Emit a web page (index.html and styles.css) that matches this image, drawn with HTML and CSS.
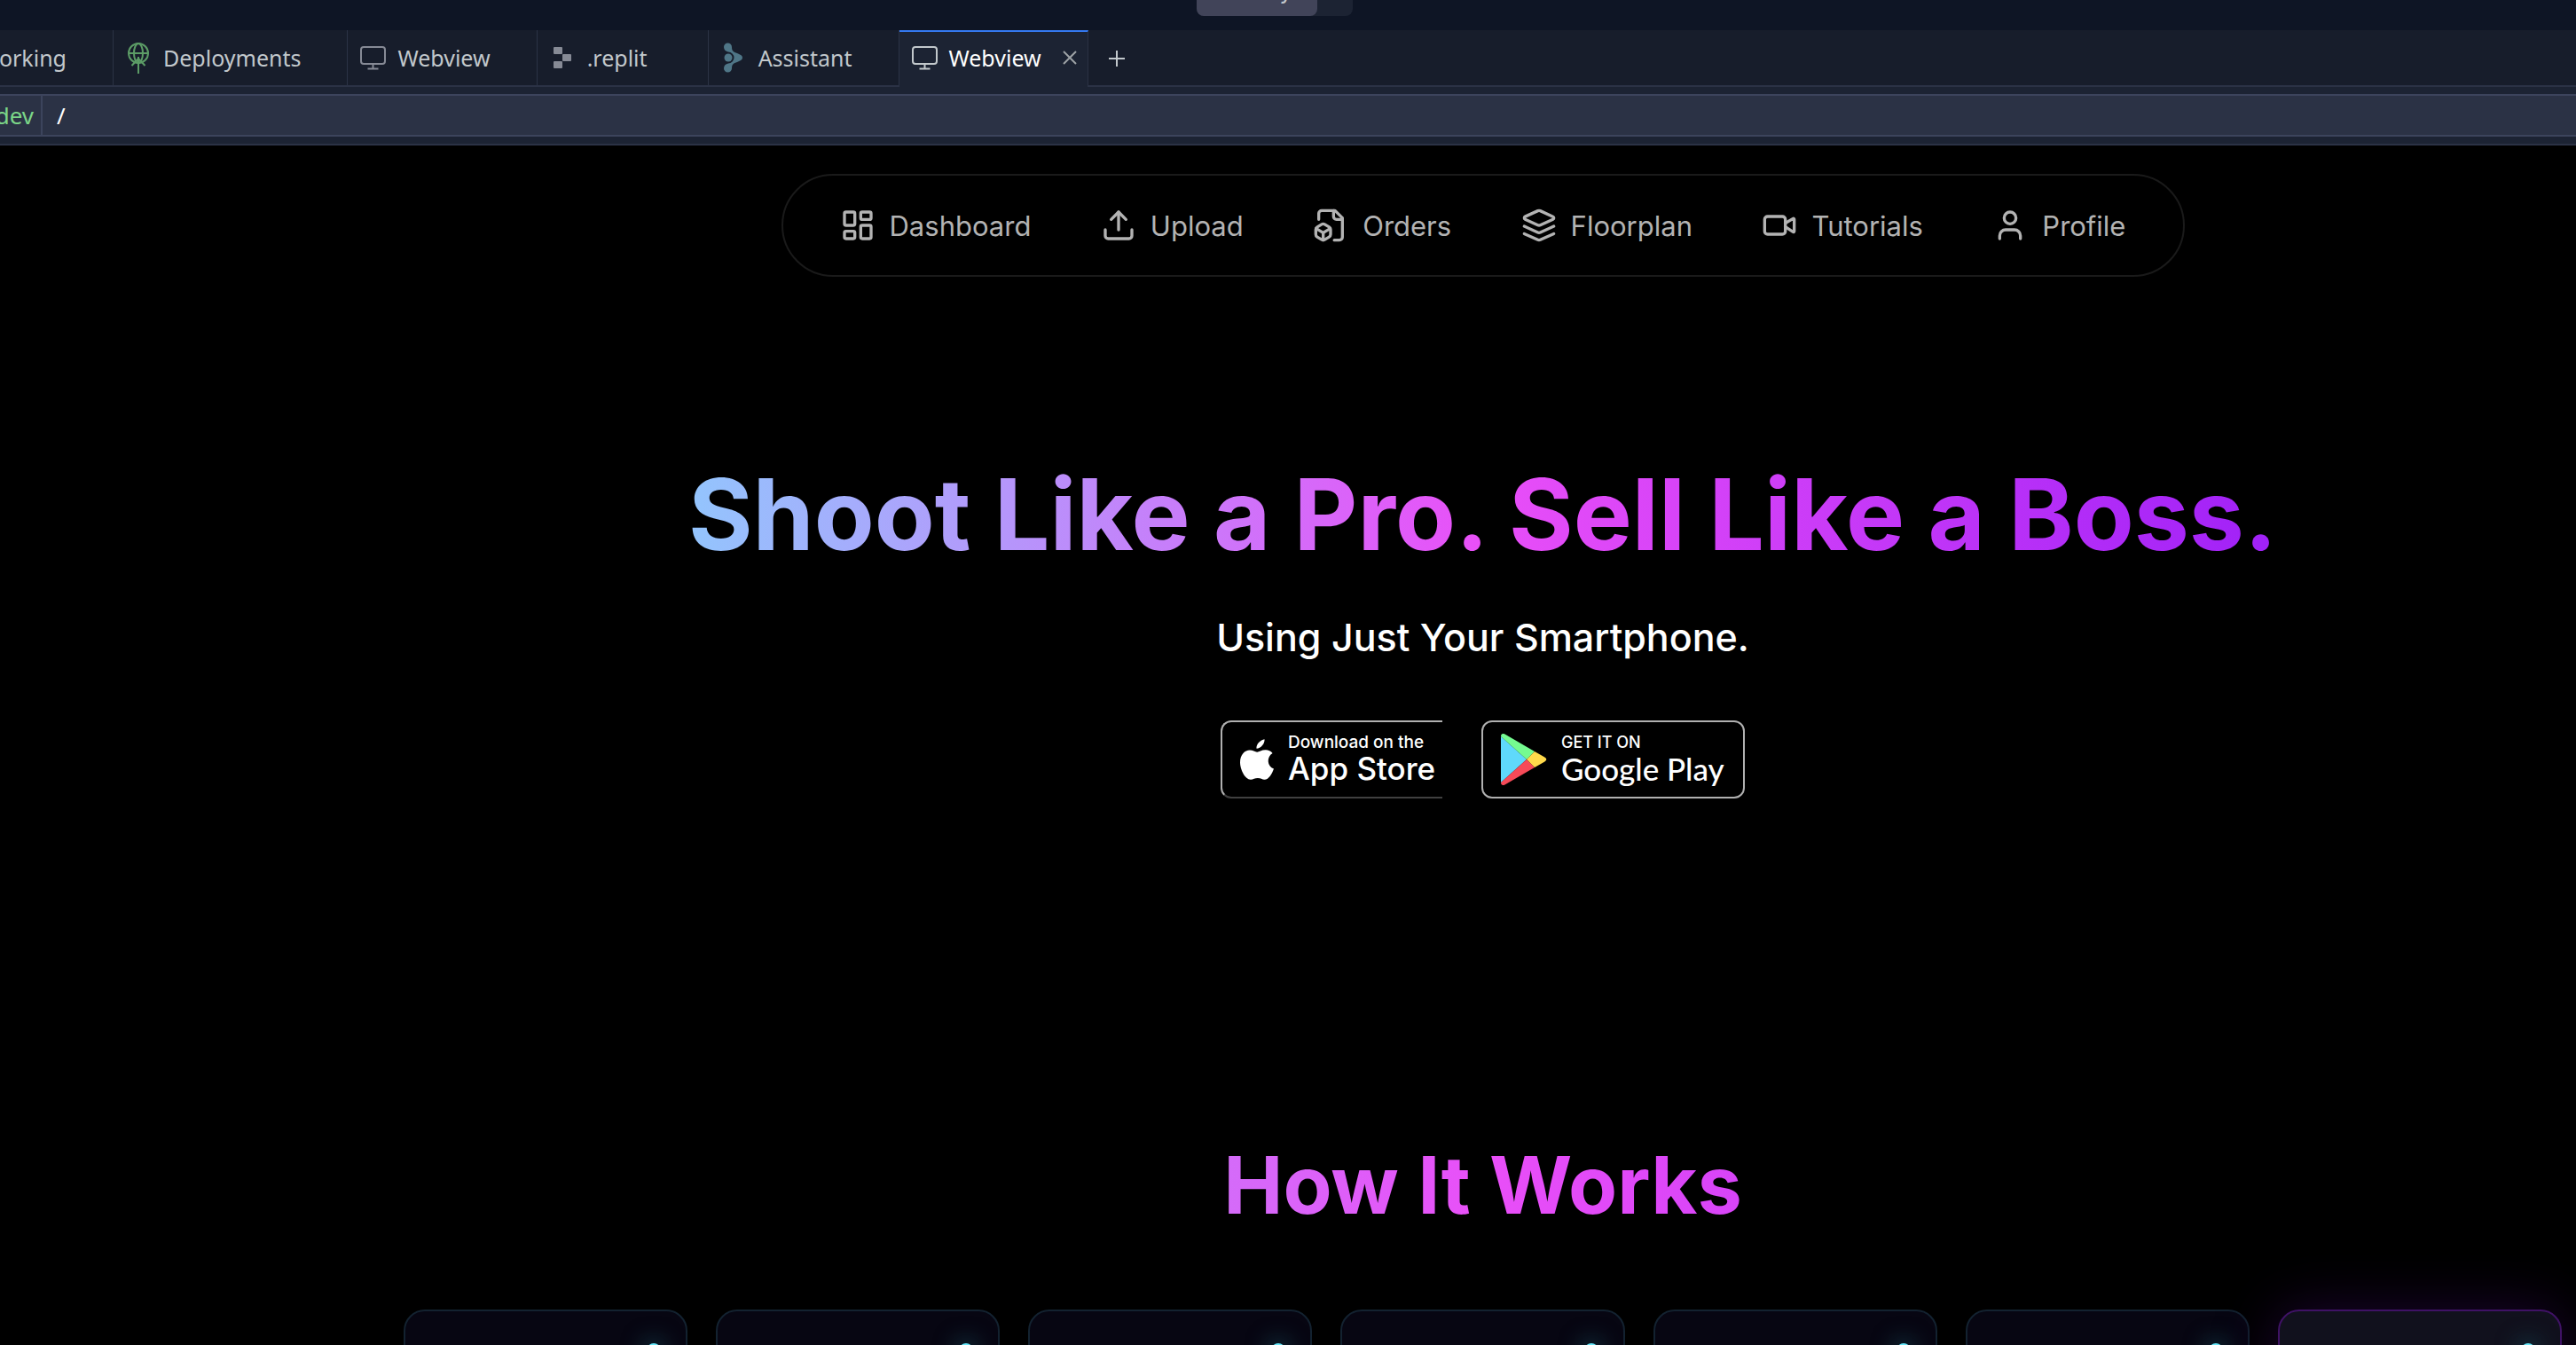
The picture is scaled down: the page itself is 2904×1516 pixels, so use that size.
FILE: index.html
```html
<!DOCTYPE html>
<html lang="en">
<head>
<meta charset="utf-8">
<title>Webview</title>
<link rel="stylesheet" href="styles.css">
</head>
<body>
<header class="topbar">
  <div class="switcher"><button class="switcher-button" type="button">y</button></div>
</header>
<nav class="tabs" aria-label="Open panes">
  <button class="tab tab-first" type="button">Networking</button>
  <button class="tab" type="button">
    <svg class="tab-icon green" viewBox="0 0 32 42" fill="none" stroke="currentColor" stroke-width="2"><circle cx="16" cy="16" r="11"/><ellipse cx="16" cy="16" rx="5" ry="11"/><path d="M5 16h22M16 20v19M8.500 30l7.500-8 7.500 8"/></svg>
    Deployments</button>
  <button class="tab" type="button">
    <svg class="tab-icon" viewBox="0 0 32 32" fill="none" stroke="currentColor" stroke-width="2"><rect x="3" y="4" width="27" height="19" rx="3"/><path d="M16.500 23v5M10.500 28.500h12"/></svg>
    Webview</button>
  <button class="tab" type="button">
    <svg class="tab-icon" viewBox="0 0 32 32" fill="currentColor"><rect x="6" y="4" width="10" height="8" rx="1"/><rect x="16" y="12" width="10" height="8" rx="1"/><rect x="6" y="20" width="10" height="8" rx="1"/></svg>
    .replit</button>
  <button class="tab" type="button">
    <svg class="tab-icon teal" viewBox="0 0 32 32" fill="currentColor"><circle cx="10" cy="16" r="4.500"/><path d="M5 4a4.500 4.500 0 0 1 9 0c0 5 2 5.500 6 7s6 3 6 5-2 3.500-6 5-6 2-6 7a4.500 4.500 0 0 1-9 0c0-3 2-5 5-5.500a6.500 6.500 0 0 0 0-13C7 9 5 7 5 4z"/></svg>
    Assistant</button>
  <button class="tab tab-active" type="button">
    <svg class="tab-icon" viewBox="0 0 32 32" fill="none" stroke="currentColor" stroke-width="2"><rect x="3" y="4" width="27" height="19" rx="3"/><path d="M16.500 23v5M10.500 28.500h12"/></svg>
    Webview
    <svg class="close" viewBox="0 0 16 16" fill="none" stroke="currentColor" stroke-width="2"><path d="M1 1l14 14M15 1L1 15"/></svg></button>
  <button class="new-tab" type="button" aria-label="New tab"><svg class="plus" viewBox="0 0 18 18" fill="none" stroke="currentColor" stroke-width="2"><path d="M9 0v18M0 9h18"/></svg></button>
</nav>
<div class="address">
  <span class="host">.dev</span>
  <input class="path" type="text" value="/" aria-label="Path">
</div>
<main class="page">
  <nav class="menu" aria-label="Main">
    <a class="menu-link" href="#dashboard"><svg class="icon" viewBox="0 0 24 24"><rect width="7" height="9" x="3" y="3" rx="1"/><rect width="7" height="5" x="14" y="3" rx="1"/><rect width="7" height="9" x="14" y="12" rx="1"/><rect width="7" height="5" x="3" y="16" rx="1"/></svg>Dashboard</a>
    <a class="menu-link" href="#upload"><svg class="icon" viewBox="0 0 24 24"><path d="M21 15v4a2 2 0 0 1-2 2H5a2 2 0 0 1-2-2v-4"/><path d="m17 8-5-5-5 5"/><path d="M12 3v12"/></svg>Upload</a>
    <a class="menu-link" href="#orders"><svg class="icon" viewBox="0 0 24 24"><path d="M14.500 22H18a2 2 0 0 0 2-2V7l-5-5H6a2 2 0 0 0-2 2v4"/><path d="M14 2v4a2 2 0 0 0 2 2h4"/><path d="M3 13.100a2 2 0 0 0-1 1.760v3.240a2 2 0 0 0 .97 1.780L6 21.700a2 2 0 0 0 2.030.010L11 19.900a2 2 0 0 0 1-1.760V14.900a2 2 0 0 0-.97-1.780L8 11.300a2 2 0 0 0-2.030-.010Z"/><path d="M7 17v5"/><path d="M11.700 14.200 7 17l-4.700-2.800"/></svg>Orders</a>
    <a class="menu-link" href="#floorplan"><svg class="icon" viewBox="0 0 24 24"><path d="m12.830 2.180a2 2 0 0 0-1.660 0L2.600 6.080a1 1 0 0 0 0 1.830l8.580 3.910a2 2 0 0 0 1.660 0l8.580-3.900a1 1 0 0 0 0-1.830Z"/><path d="m22 17.650-9.170 4.160a2 2 0 0 1-1.660 0L2 17.650"/><path d="m22 12.650-9.170 4.160a2 2 0 0 1-1.660 0L2 12.650"/></svg>Floorplan</a>
    <a class="menu-link" href="#tutorials"><svg class="icon" viewBox="0 0 24 24"><path d="m16 13 5.223 3.482a.5.5 0 0 0 .777-.416V7.870a.5.5 0 0 0-.752-.432L16 10.500"/><rect x="2" y="6" width="14" height="12" rx="2"/></svg>Tutorials</a>
    <a class="menu-link" href="#profile"><svg class="icon" viewBox="0 0 24 24"><path d="M19 21v-2a4 4 0 0 0-4-4H9a4 4 0 0 0-4 4v2"/><circle cx="12" cy="7" r="4"/></svg>Profile</a>
  </nav>
  <section class="hero">
    <h1 class="headline">Shoot Like a Pro. Sell Like a Boss.</h1>
    <p class="tagline">Using Just Your Smartphone.</p>
    <div class="badges">
      <a class="badge badge-apple" href="#app-store">
        <svg class="apple" viewBox="0 0 40 48" fill="#fff"><path d="M29 0c.5 5-4.500 11-9.500 11C18.800 6 24 .8 29 0zM38.500 16.500c-7.500 4.500-6.500 15.500 1.500 18.500-2 5.500-6 13-11 13-3 0-4.500-1.800-8-1.800S15.500 48 12.500 48C6 48 0 36 0 27.500c0-9 5.500-14.500 11.500-14.500 3.500 0 6.500 2.300 8.700 2.300 2 0 5.800-2.700 10.300-2.500 3 .1 6 1.300 8 3.700z"/></svg>
        <span class="badge-text"><span class="badge-small">Download on the</span><span class="badge-large">App Store</span></span>
      </a>
      <a class="badge badge-google" href="#google-play">
        <svg class="play" viewBox="0 0 52 58"><path d="M0 3v52l29-26z" fill="#5fd9fb"/><path d="M0 3c0-2.500 2-4 4.500-2.500L38 20l-9 9z" fill="#75fb90"/><path d="M38 20l11 6.300c3 1.700 3 3.700 0 5.400L38 38l-9-9z" fill="#fed94b"/><path d="M0 55c0 2.500 2 4 4.500 2.500L38 38l-9-9z" fill="#f64a58"/></svg>
        <span class="badge-text google"><span class="badge-small">GET IT ON</span><span class="badge-large">Google Play</span></span>
      </a>
    </div>
  </section>
  <section class="steps">
    <h2 class="steps-title">How It Works</h2>
    <div class="cards">
      <article class="card"><span class="dot"></span></article>
      <article class="card"><span class="dot"></span></article>
      <article class="card"><span class="dot"></span></article>
      <article class="card"><span class="dot"></span></article>
      <article class="card"><span class="dot"></span></article>
      <article class="card"><span class="dot"></span></article>
      <article class="card card-active"><span class="dot"></span></article>
    </div>
  </section>
</main>
</body>
</html>
```

FILE: styles.css
```css
* { box-sizing: border-box; }
html, body { height: 100%; }
body {
  margin: 0;
  display: flex;
  flex-direction: column;
  overflow: hidden;
  background: #000;
  font-family: Inter, sans-serif;
}
button, input { font: inherit; color: inherit; border: 0; padding: 0; background: none; }
a { color: inherit; text-decoration: none; }

.topbar {
  flex: none;
  height: 34px;
  overflow: hidden;
  background: #0e1525;
  display: flex;
  padding-left: 1349px;
}
.switcher {
  width: 176px;
  height: 50px;
  margin-top: -32px;
  border-radius: 8px;
  background: #1c2333;
}
.switcher-button {
  display: block;
  width: 136px;
  height: 50px;
  padding: 0 28px 8px 0;
  border-radius: 8px;
  background: #414459;
  color: #c2c8cc;
  font-size: 26px;
  text-align: right;
}

.tabs {
  flex: none;
  height: 64px;
  display: flex;
  background: #171d2b;
  font-family: "Noto Sans", sans-serif;
  font-size: 25px;
  color: #c2c8cc;
  box-shadow: inset 0 -2px #2b3245;
}
.tab {
  display: flex;
  align-items: center;
  gap: 12px;
  min-width: 193px;
  padding: 0 52px 3px 12px;
  border-right: 1px solid #2b3245;
  white-space: nowrap;
}
.tab-first { min-width: 0; width: 128px; justify-content: flex-end; }
.tab-icon { width: 32px; height: 32px; flex: none; color: #868a95; overflow: visible; }
.green { color: #5c9c66; height: 42px; }
.teal { color: #4f7687; }
.tab-active {
  padding: 0 12px 4px;
  background: #1c2333;
  border-top: 2px solid #3478f0;
  color: #fff;
}
.tab-active .tab-icon { color: #c2c8cc; }
.close { width: 16px; height: 16px; margin-left: 12px; color: #9da2a6; overflow: visible; }
.new-tab { width: 64px; display: flex; align-items: center; justify-content: center; }
.plus { width: 18px; height: 18px; }

.address {
  flex: none;
  height: 66px;
  display: flex;
  padding: 8px 0;
  background: #1c2333;
  border-bottom: 2px solid #2b3245;
  font-family: "Noto Sans", sans-serif;
  font-size: 26px;
}
.host, .path {
  background: #2b3245;
  border-top: 2px solid #3c445c;
  border-bottom: 2px solid #3c445c;
  display: flex;
  align-items: center;
}
.host {
  width: 48px;
  padding-right: 8px;
  justify-content: flex-end;
  border-right: 2px solid #3c445c;
  color: #7bd688;
}
.path { flex: 1; min-width: 0; padding-left: 16px; color: #fff; }

.page {
  flex: 1;
  min-height: 0;
  overflow: hidden;
  display: flex;
  flex-direction: column;
  align-items: center;
  padding: 32px 16px 0 455px;
}
.menu {
  flex: none;
  display: flex;
  align-items: center;
  justify-content: space-between;
  width: 100%;
  max-width: 1582px;
  height: 116px;
  padding: 0 64px;
  border: 2px solid #1a1a1a;
  border-radius: 58px;
  font-size: 31px;
  color: #b3b3b3;
}
.menu-link { display: flex; align-items: center; gap: 16px; }
.icon {
  width: 40px;
  height: 40px;
  fill: none;
  stroke: currentColor;
  stroke-width: 2;
  stroke-linecap: round;
  stroke-linejoin: round;
}

.hero { width: 100%; flex: none; padding-top: 208px; text-align: center; }
.headline, .steps-title {
  margin: 0;
  font-weight: 700;
  background: linear-gradient(to right, #93c5fd, #e94ff8 50%, #a021f7);
  -webkit-background-clip: text;
  background-clip: text;
  color: transparent;
}
.headline { width: fit-content; margin: 0 auto; font-size: 111px; line-height: 120px; white-space: nowrap; }
.tagline { margin: 50px 0 0; font-size: 43px; line-height: 56px; font-weight: 500; color: #fff; }
.badges { display: flex; justify-content: center; gap: 44px; margin-top: 66px; }
.badge {
  display: flex;
  align-items: center;
  gap: 16px;
  height: 88px;
  border: 2px solid #b0b0b0;
  border-radius: 12px;
  color: #fff;
}
.badge-apple {
  width: 250px;
  padding-left: 20px;
  border-right: 0;
  border-bottom-color: #404040;
  border-radius: 12px 0 0 12px;
}
.badge-google { width: 297px; padding-left: 20px; }
.apple { width: 38px; height: 48px; }
.play { width: 52px; height: 58px; }
.badge-text { display: flex; flex-direction: column; text-align: left; font-weight: 500; }
.badge-small { font-size: 19px; line-height: 20px; }
.badge-large { font-size: 35px; line-height: 38px; white-space: nowrap; }
.google .badge-small { font-size: 18px; }
.google .badge-large { font-family: Lato, sans-serif; }

.steps { width: 100%; flex: none; padding-top: 388px; text-align: center; }
.steps-title { font-size: 90px; line-height: 96px; }
.cards { display: grid; grid-template-columns: repeat(7, 1fr); gap: 32px; margin-top: 92px; }
.card {
  display: flex;
  justify-content: flex-end;
  height: 320px;
  padding: 36px 28px;
  border: 2px solid #132230;
  border-radius: 24px;
  background: #070612;
}
.card-active { background: #11111d; border-color: #3f1265; box-shadow: 0 0 64px #1c0530; }
.dot { width: 16px; height: 16px; border-radius: 8px; background: #67e8f9; box-shadow: 0 0 24px 4px #153a48; }
```
